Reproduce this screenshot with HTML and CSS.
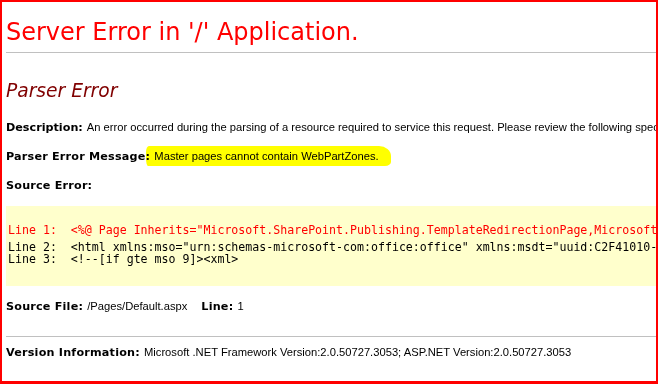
FILE: index.html
```html
<!DOCTYPE html>
<html lang="en">
<head>
    <meta charset="UTF-8">
    <title>Server Error in '/' Application.</title>
    <link rel="stylesheet" href="styles.css">
</head>
<body>
    <div class="frame">
        <h1>Server Error in '/' Application.</h1>
        <div class="rule"></div>

        <h2>Parser Error</h2>

        <p class="row first"><b class="tight">Description: </b>An error occurred during the parsing of a resource required to service this request. Please review the following specific parse error details and modify your source file appropriately.</p>
        <p class="row"><b>Parser Error Message: </b><span class="marker">Master pages cannot contain WebPartZones.</span></p>
        <p class="row"><b>Source Error:</b></p>

        <div class="source">
            <pre class="line error">Line 1:  &lt;%@ Page Inherits="Microsoft.SharePoint.Publishing.TemplateRedirectionPage,Microsoft.SharePoint.Publishing,Version=12.0.0.0,Culture=neutral,PublicKeyToken=71e9bce111e9429c" %&gt;</pre>
            <pre class="line">Line 2:  &lt;html xmlns:mso="urn:schemas-microsoft-com:office:office" xmlns:msdt="uuid:C2F41010-65B3-11d1-A29F-00AA00C14882" xmlns="http://www.w3.org/TR/REC-html40"&gt;</pre>
            <pre class="line">Line 3:  &lt;!--[if gte mso 9]&gt;&lt;xml&gt;</pre>
        </div>

        <p class="row file"><b>Source File: </b>/Pages/Default.aspx<b class="line-no">Line: </b>1</p>
        <div class="rule bottom"></div>
        <p class="row version"><b>Version Information: </b>Microsoft .NET Framework Version:2.0.50727.3053; ASP.NET Version:2.0.50727.3053</p>
    </div>
</body>
</html>
```

FILE: styles.css
```css
body {
    margin: 0;
    padding: 0;
    background-color: white;
    color: black;
    font-family: 'DejaVu Sans', Verdana, sans-serif;
}

.frame {
    box-sizing: border-box;
    width: 658px;
    height: 384px;
    border: solid #ff0000;
    border-width: 2px 2px 3px 2px;
    padding-left: 4px;
    overflow: hidden;
}

h1 {
    margin: 16px 0 0 0;
    font-size: 24px;
    line-height: 28px;
    font-weight: normal;
    color: #ff0000;
    white-space: nowrap;
}

.rule {
    margin-top: 6px;
    border-top: 1px solid #c0c0c0;
}

h2 {
    margin: 27px 0 0 0;
    font-size: 18.67px;
    line-height: 22px;
    font-weight: normal;
    font-style: italic;
    color: #800000;
}

.row {
    margin: 14px 0 0 0;
    font-family: 'Liberation Sans', Arial, sans-serif;
    font-size: 11.2px;
    line-height: 14px;
    white-space: nowrap;
}

.row.first {
    margin-top: 18px;
}

.row b {
    font-family: 'DejaVu Sans', Verdana, sans-serif;
    font-weight: bold;
    letter-spacing: 0.2px;
}

.row b.tight {
    letter-spacing: 0;
}

.marker {
    margin-left: -8px;
    padding: 4px 12px 4px 8px;
    background: #ffff00;
    border-radius: 3px 12px 6px 2px / 6px 10px 4px 8px;
    mix-blend-mode: multiply;
}

.source {
    margin-top: 13px;
    padding: 18px 0 21px 2px;
    background-color: #ffffcc;
}

.line {
    margin: 0;
    font-family: 'DejaVu Sans Mono', 'Lucida Console', monospace;
    font-size: 11.6px;
    line-height: 12px;
    white-space: pre;
}

.line.error {
    margin-bottom: 5px;
    color: #ff0000;
}

.row.file {
    margin-top: 13px;
}

.line-no {
    margin-left: 14px;
}

.rule.bottom {
    margin-top: 22px;
}

.row.version {
    margin-top: 8px;
}
```
